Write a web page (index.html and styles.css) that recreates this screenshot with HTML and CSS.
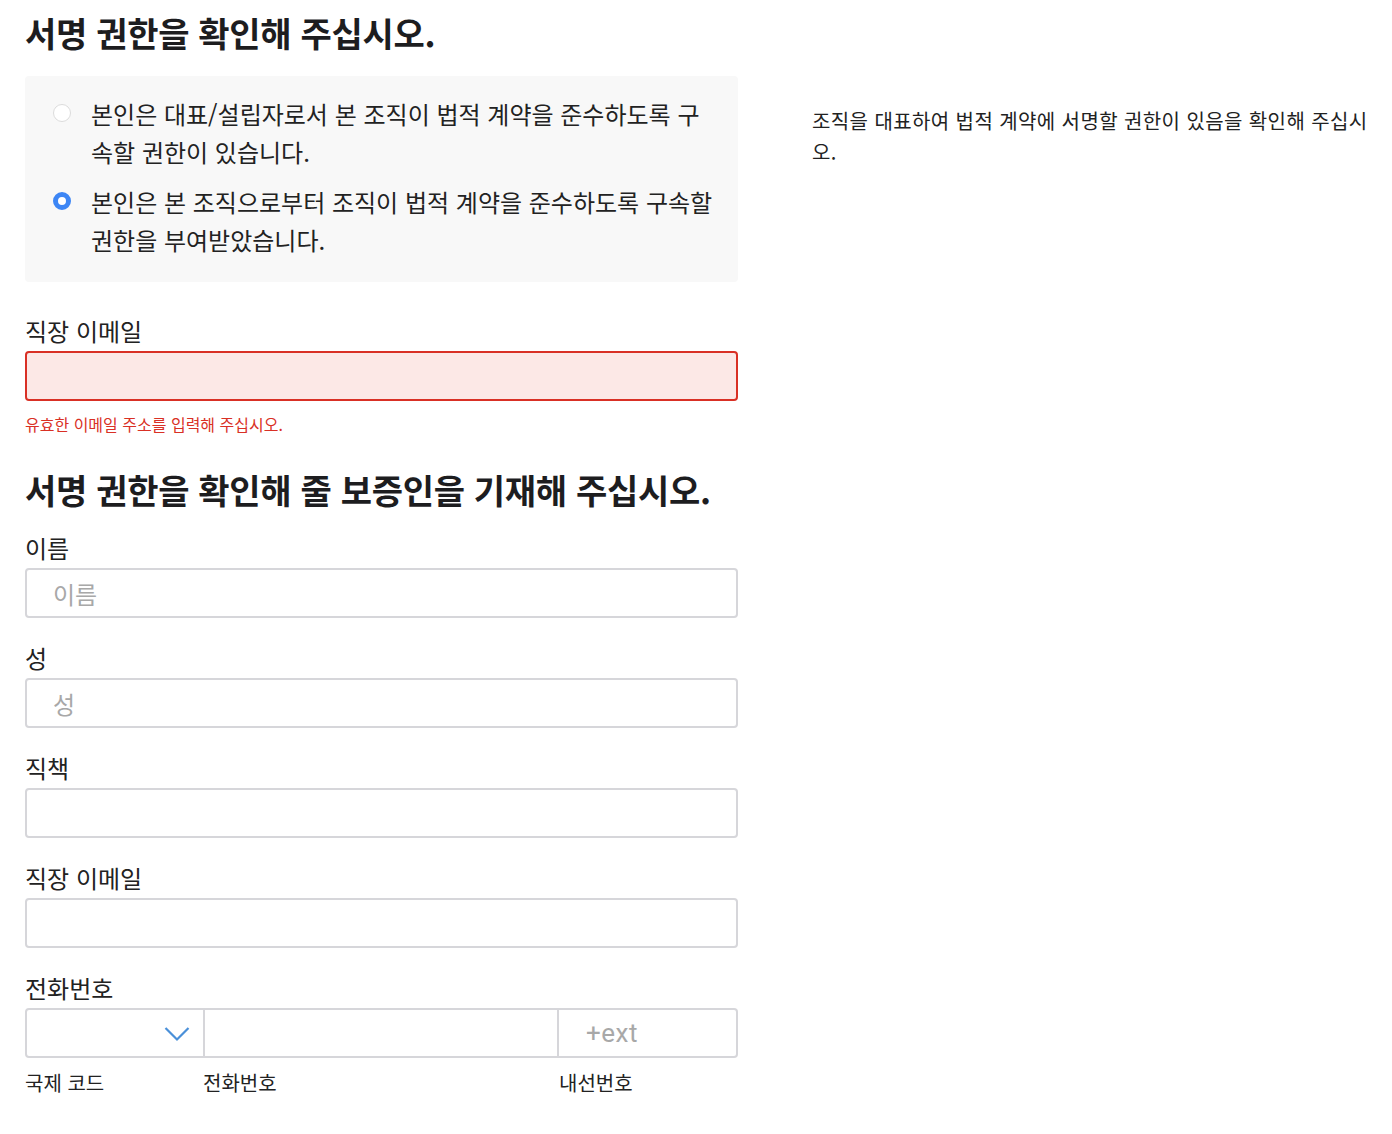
FILE: index.html
```html
<!DOCTYPE html>
<html lang="ko">
<head>
<meta charset="utf-8">
<title>서명 권한</title>
<link rel="stylesheet" href="styles.css">
</head>
<body>
<div class="page">
  <main class="form-col">
    <h1 class="heading">서명 권한을 확인해 주십시오.</h1>
    <div class="radio-box">
      <label class="radio-row">
        <span class="radio"></span>
        <span class="radio-text">본인은 대표/설립자로서 본 조직이 법적 계약을 준수하도록 구속할 권한이 있습니다.</span>
      </label>
      <label class="radio-row">
        <span class="radio checked"></span>
        <span class="radio-text">본인은 본 조직으로부터 조직이 법적 계약을 준수하도록 구속할 권한을 부여받았습니다.</span>
      </label>
    </div>

    <div class="field first">
      <div class="label">직장 이메일</div>
      <div class="input error"></div>
      <div class="error-text">유효한 이메일 주소를 입력해 주십시오.</div>
    </div>

    <h2 class="heading second">서명 권한을 확인해 줄 보증인을 기재해 주십시오.</h2>

    <div class="field">
      <div class="label">이름</div>
      <div class="input"><span class="placeholder">이름</span></div>
    </div>
    <div class="field">
      <div class="label">성</div>
      <div class="input"><span class="placeholder">성</span></div>
    </div>
    <div class="field">
      <div class="label">직책</div>
      <div class="input"></div>
    </div>
    <div class="field">
      <div class="label">직장 이메일</div>
      <div class="input"></div>
    </div>
    <div class="field">
      <div class="label">전화번호</div>
      <div class="phone-row">
        <div class="phone-cell code">
          <div class="input select">
            <svg class="chevron" width="26" height="16" viewBox="0 0 26 16"><path d="M1.5 2 L13 13.5 L24.5 2" fill="none" stroke="#4a90d9" stroke-width="2.2"/></svg>
          </div>
          <div class="sub-label">국제 코드</div>
        </div>
        <div class="phone-cell number">
          <div class="input middle"></div>
          <div class="sub-label">전화번호</div>
        </div>
        <div class="phone-cell ext">
          <div class="input ext-input"><span class="placeholder latin">+ext</span></div>
          <div class="sub-label">내선번호</div>
        </div>
      </div>
    </div>
  </main>
  <aside class="side-col">
    <p class="side-text">조직을 대표하여 법적 계약에 서명할 권한이 있음을 확인해 주십시오.</p>
  </aside>
</div>
</body>
</html>
```

FILE: styles.css
```css
* { box-sizing: border-box; }
html, body { margin: 0; padding: 0; background: #fff; }
body {
  font-family: "Noto Sans CJK KR", "Noto Sans", sans-serif;
  color: #222;
}
.page {
  display: grid;
  grid-template-columns: 713px 1fr;
  column-gap: 74px;
  padding: 0 18px 0 25px;
}
.heading {
  margin: 0;
  font-size: 34px;
  font-weight: 600;
  line-height: 42px;
  color: #1d1d1f;
  letter-spacing: -0.3px;
}
h1.heading { padding-top: 12px; }
.radio-box {
  margin-top: 22px;
  background: #f8f8f8;
  border-radius: 4px;
  padding: 19px 22px 23px 28px;
}
.radio-row {
  display: flex;
  align-items: flex-start;
  gap: 20px;
}
.radio-row + .radio-row { margin-top: 12px; }
.radio {
  flex: none;
  width: 18px;
  height: 18px;
  margin-top: 9px;
  border-radius: 50%;
  border: 1.5px solid #dcdcdc;
  background: #fff;
}
.radio.checked {
  border: 5.5px solid #3d86f5;
  background: #fff;
}
.radio-text {
  font-size: 24px;
  line-height: 38px;
  color: #222;
}
.field { margin-top: 25px; }
.field.first { margin-top: 34px; }
.label {
  font-size: 24px;
  line-height: 30px;
  color: #222;
  margin-bottom: 5px;
}
.input {
  height: 50px;
  border: 2px solid #d6d6da;
  border-radius: 4px;
  background: #fff;
  display: flex;
  align-items: center;
  padding: 0 26px;
}
.input.error {
  border-color: #d93025;
  background: #fce8e6;
}
.error-text {
  margin-top: 13px;
  font-size: 16px;
  line-height: 20px;
  color: #d93025;
}
.heading.second { margin-top: 35px; }
.heading.second + .field { margin-top: 22px; }
.placeholder {
  font-size: 24px;
  color: #a8a8a8;
}
.placeholder.latin {
  font-family: "Roboto", "Noto Sans", sans-serif;
  font-size: 26px;
  letter-spacing: 0.5px;
}
.phone-row {
  display: grid;
  grid-template-columns: 180px 354px 179px;
}
.phone-cell .input.select {
  border-radius: 4px 0 0 4px;
  justify-content: flex-end;
  padding: 0 13px 0 0;
}
.phone-cell .input.middle {
  border-radius: 0;
  border-left: none;
}
.phone-cell .input.ext-input {
  border-radius: 0 4px 4px 0;
  border-left: none;
  padding-left: 27px;
}
.chevron { display: block; margin-top: 2px; }
.sub-label {
  margin-top: 10px;
  font-size: 20px;
  line-height: 30px;
  color: #222;
}
.phone-cell.number .sub-label { margin-left: -2px; }
.phone-cell.ext .sub-label { margin-left: 0; }
.side-col { padding-top: 105px; }
.side-text {
  margin: 0;
  font-size: 20px;
  line-height: 31px;
  letter-spacing: 0.4px;
  color: #222;
}
```
